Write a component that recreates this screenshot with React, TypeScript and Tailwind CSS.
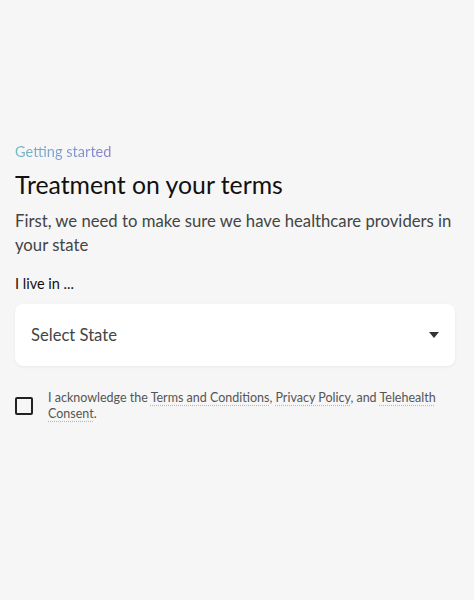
import React from 'react';

const App = () => {
    return (
        <div className="min-h-[600px] w-full bg-[#f6f6f6] font-['Lato',sans-serif] text-[#111]">
            <div className="pl-[15px] pr-[19px] pt-[143px]">
                {/* Encabezado */}
                <p className="text-[14.6px] leading-[18px] bg-gradient-to-r from-[#6fb9c8] to-[#8a7ed0] bg-clip-text text-transparent w-fit">
                    Getting started
                </p>
                <h1 className="mt-[9px] text-[24.8px] leading-[30px] text-[#111]">Treatment on your terms</h1>
                <p className="mt-[9px] text-[16.7px] leading-[24px] text-[#444]">
                    First, we need to make sure we have healthcare providers in your state
                </p>

                {/* Selector de estado */}
                <label className="block mt-[17px] text-[14.5px] leading-[20px] text-[#111]">I live in ...</label>
                <div className="mt-[10px] h-[62px] bg-white rounded-[8px] shadow-[0_1px_3px_rgba(0,0,0,0.06)] flex items-center justify-between pl-[16px] pr-[16px]">
                    <span className="text-[16.6px] text-[#444]">Select State</span>
                    <svg width="10" height="6" viewBox="0 0 10 6">
                        <path d="M0 0 H10 L5 6 Z" fill="#333" />
                    </svg>
                </div>

                {/* Consentimiento */}
                <div className="mt-[24px] flex items-start gap-[15px]">
                    <div className="mt-[7px] w-[18px] h-[18px] shrink-0 border-2 border-[#222] rounded-[2px]" />
                    <p className="text-[12.5px] leading-[16px] text-[#555]">
                        I acknowledge the{' '}
                        <span className="underline decoration-dotted decoration-[#bbb] underline-offset-[3px]">Terms and Conditions</span>,{' '}
                        <span className="underline decoration-dotted decoration-[#bbb] underline-offset-[3px]">Privacy Policy</span>, and{' '}
                        <span className="underline decoration-dotted decoration-[#bbb] underline-offset-[3px]">Telehealth Consent</span>.
                    </p>
                </div>
            </div>
        </div>
    );
};

export default App;
